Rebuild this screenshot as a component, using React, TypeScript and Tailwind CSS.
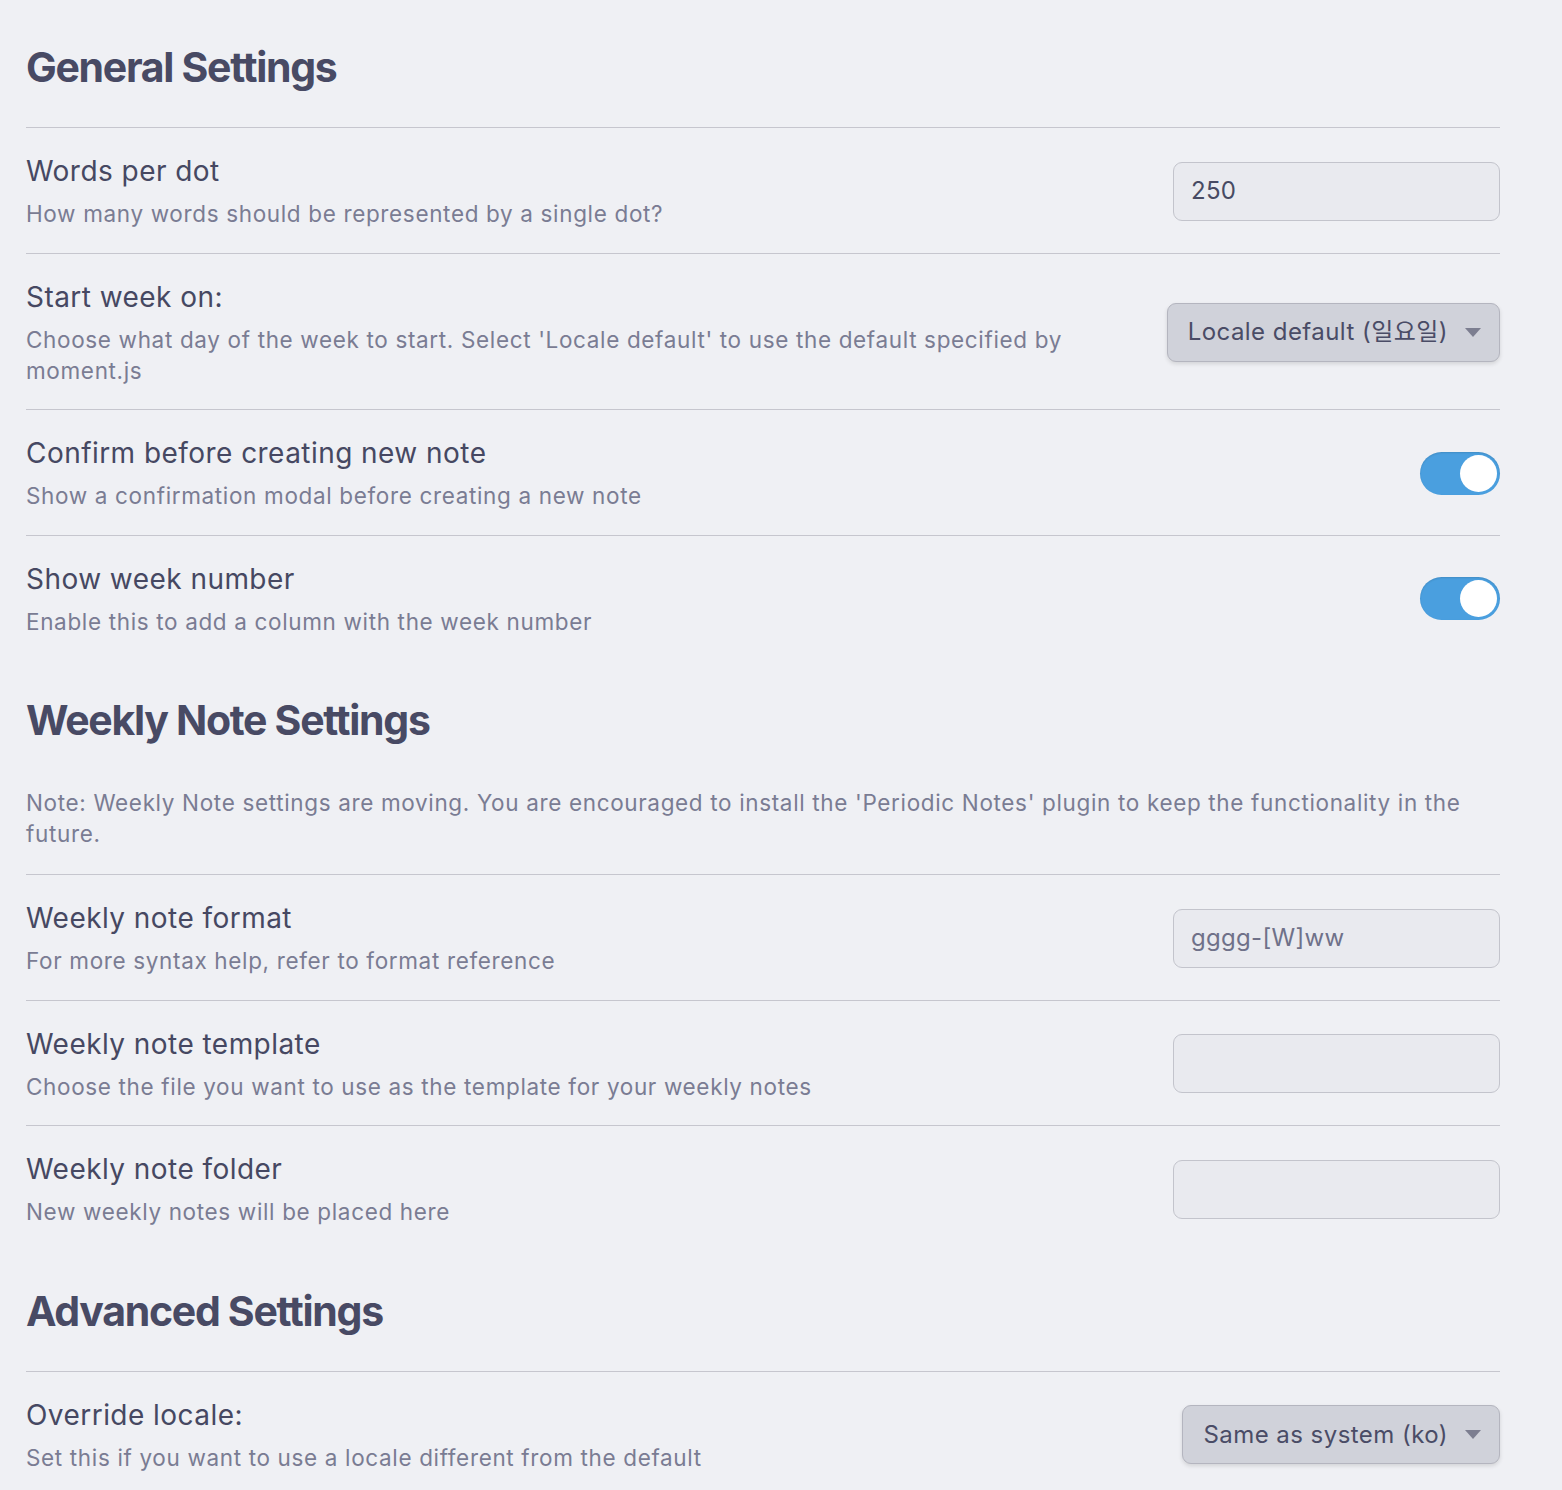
import React from 'react';

type Control =
  | { kind: 'input'; value?: string; placeholder?: string }
  | { kind: 'select'; value: string }
  | { kind: 'toggle'; on: boolean };

interface Item {
  name: string;
  desc: string[];
  control: Control;
}

const GENERAL: Item[] = [
  {
    name: 'Words per dot',
    desc: ['How many words should be represented by a single dot?'],
    control: { kind: 'input', value: '250' },
  },
  {
    name: 'Start week on:',
    desc: ["Choose what day of the week to start. Select 'Locale default' to use the default specified by", 'moment.js'],
    control: { kind: 'select', value: 'Locale default (일요일)' },
  },
  {
    name: 'Confirm before creating new note',
    desc: ['Show a confirmation modal before creating a new note'],
    control: { kind: 'toggle', on: true },
  },
  {
    name: 'Show week number',
    desc: ['Enable this to add a column with the week number'],
    control: { kind: 'toggle', on: true },
  },
];

const WEEKLY: Item[] = [
  {
    name: 'Weekly note format',
    desc: ['For more syntax help, refer to format reference'],
    control: { kind: 'input', placeholder: 'gggg-[W]ww' },
  },
  {
    name: 'Weekly note template',
    desc: ['Choose the file you want to use as the template for your weekly notes'],
    control: { kind: 'input' },
  },
  {
    name: 'Weekly note folder',
    desc: ['New weekly notes will be placed here'],
    control: { kind: 'input' },
  },
];

const ADVANCED: Item[] = [
  {
    name: 'Override locale:',
    desc: ['Set this if you want to use a locale different from the default'],
    control: { kind: 'select', value: 'Same as system (ko)' },
  },
];

function ControlView({ control }: { control: Control }) {
  if (control.kind === 'input') {
    return (
      <div className="w-[327px] h-[59px] rounded-[9px] border border-[#c3c4cc] bg-[#e9eaef] px-[17px] flex items-center text-[24px] tracking-[0.3px]">
        {control.value ? (
          <span className="text-[#474a63]">{control.value}</span>
        ) : (
          <span className="text-[#6f7189]">{control.placeholder}</span>
        )}
      </div>
    );
  }
  if (control.kind === 'select') {
    return (
      <div className="h-[59px] rounded-[9px] border border-[#b4b5bf] bg-[#d0d2da] shadow-[0_2px_4px_rgba(0,0,0,0.12)] pl-[20px] pr-[18px] flex items-center gap-[17px] text-[24px] tracking-[0.45px] text-[#4a4c66]">
        <span>{control.value}</span>
        <svg width="16" height="9" viewBox="0 0 16 9">
          <path d="M0 0 L16 0 L8 9 Z" fill="#7c7e90" />
        </svg>
      </div>
    );
  }
  return (
    <div className="w-[80px] h-[43px] rounded-full bg-[#4a9fdf] flex items-center justify-end pr-[3px] shadow-[inset_0_1px_2px_rgba(0,0,0,0.12)]">
      <div className="w-[37px] h-[37px] rounded-full bg-white" />
    </div>
  );
}

function SettingRow({ item }: { item: Item }) {
  return (
    <div className="border-t border-[#c6c6ce] pt-[25px] pb-[23.5px] flex items-center gap-[40px]">
      <div className="flex-1 min-w-0">
        <div className="text-[28px] leading-[36px] tracking-[0.45px] text-[#464862]">{item.name}</div>
        <div className="mt-[9px] text-[22.5px] leading-[31px] text-[#7a7c93] tracking-[0.65px]">
          {item.desc.map((d) => (
            <div key={d}>{d}</div>
          ))}
        </div>
      </div>
      <div className="shrink-0">
        <ControlView control={item.control} />
      </div>
    </div>
  );
}

function Heading({ children }: { children: React.ReactNode }) {
  return (
    <h2 className="pt-[34px] pb-[34px] text-[41px] leading-[52px] font-bold tracking-[-1.3px] text-[#484a64]">
      {children}
    </h2>
  );
}

export default function App() {
  return (
    <div
      className="min-h-[1490px] bg-[#eff0f4] pl-[26px] pr-[62px] pt-[7px]"
      style={{ fontFamily: 'Inter, "Noto Sans CJK KR", sans-serif' }}
    >
      <Heading>General Settings</Heading>
      {GENERAL.map((it) => (
        <SettingRow key={it.name} item={it} />
      ))}

      <Heading>Weekly Note Settings</Heading>
      <p className="mt-[7px] mb-[25px] text-[22.5px] leading-[31px] text-[#7a7c93] tracking-[0.65px]">
        Note: Weekly Note settings are moving. You are encouraged to install the 'Periodic Notes' plugin to keep the functionality in the
        <br />
        future.
      </p>
      {WEEKLY.map((it) => (
        <SettingRow key={it.name} item={it} />
      ))}

      <Heading>Advanced Settings</Heading>
      {ADVANCED.map((it) => (
        <SettingRow key={it.name} item={it} />
      ))}
    </div>
  );
}
